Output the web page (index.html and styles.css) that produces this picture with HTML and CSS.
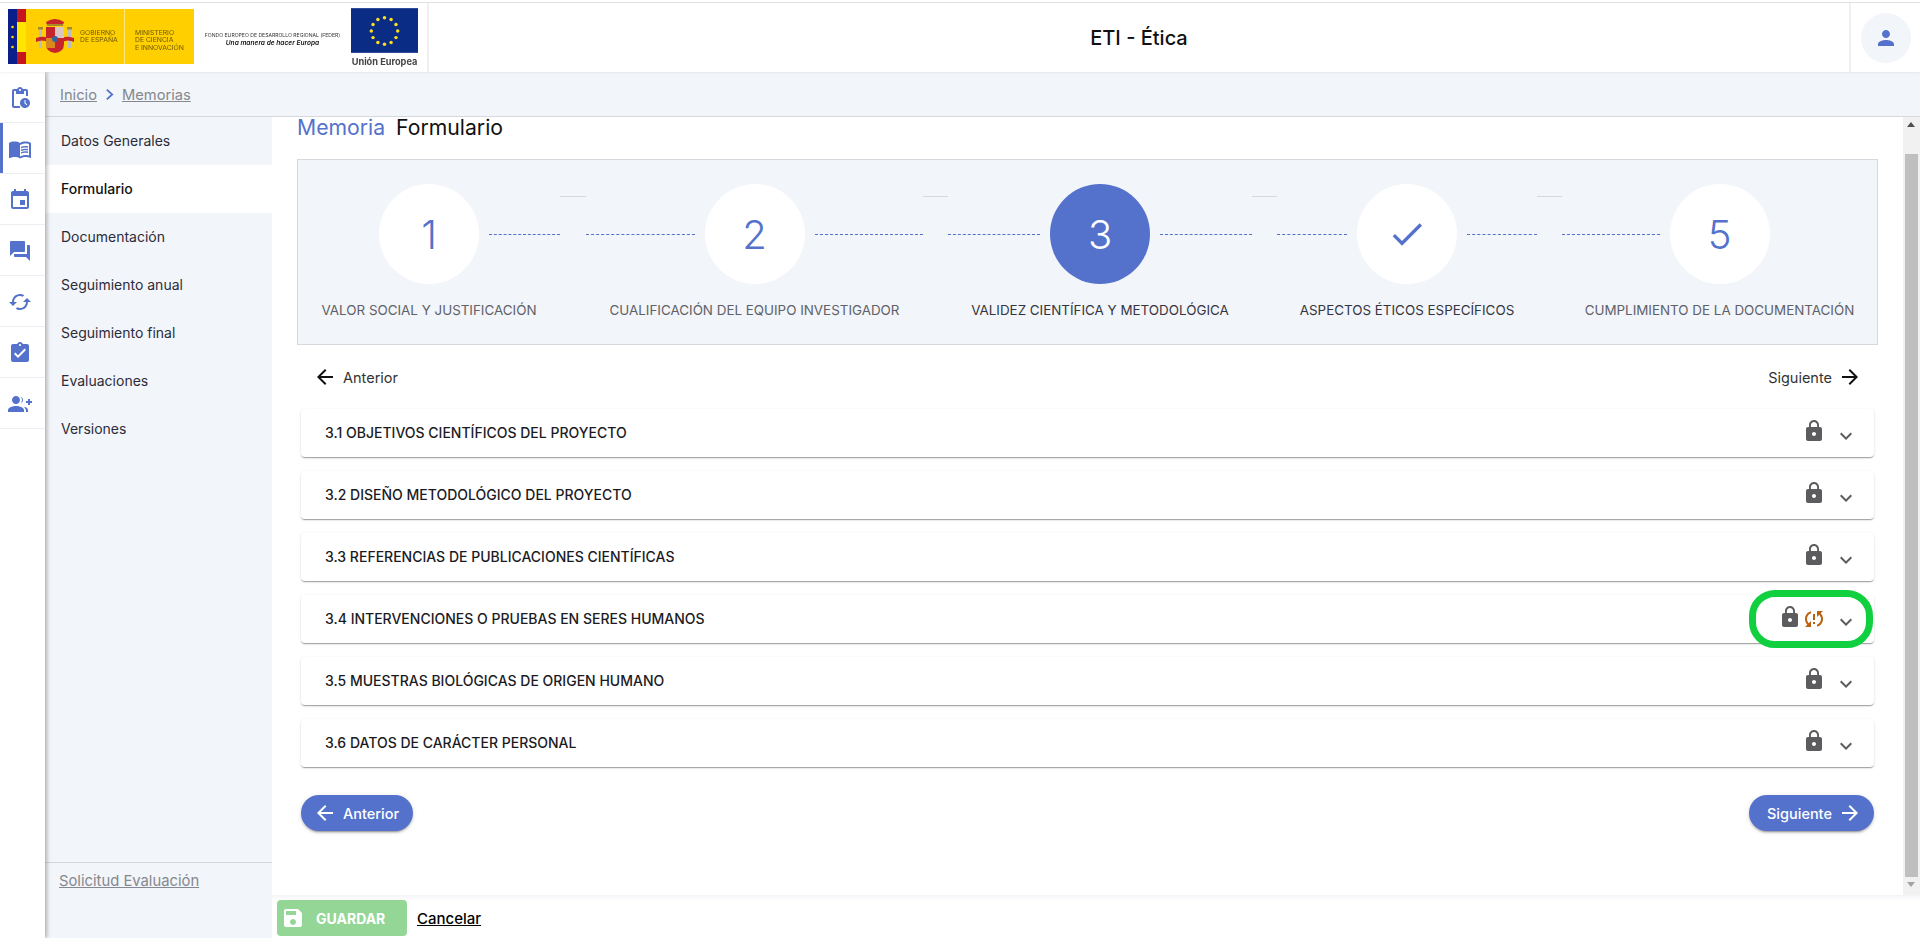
FILE: index.html
```html
<!DOCTYPE html>
<html lang="es">
<head>
<meta charset="utf-8">
<title>ETI - Ética</title>
<link rel="stylesheet" href="styles.css">
</head>
<body>
<svg class="defs" aria-hidden="true">
  <symbol id="i-pending" viewBox="0 0 24 24"><path d="M17 12c-2.76 0-5 2.24-5 5s2.24 5 5 5 5-2.24 5-5-2.24-5-5-5zm1.65 7.35L16.5 17.2V14h1v2.79l1.85 1.85-.7.71zM18 3h-3.18C14.4 1.84 13.3 1 12 1s-2.4.84-2.82 2H6c-1.1 0-2 .9-2 2v15c0 1.1.9 2 2 2h6v-2H6V5h2v3h8V5h2v5h2V5c0-1.1-.9-2-2-2zm-6 2c-.55 0-1-.45-1-1s.45-1 1-1 1 .45 1 1-.45 1-1 1z"/></symbol>
  <symbol id="i-book" viewBox="0 0 24 24"><path d="M21 5c-1.11-.35-2.33-.5-3.5-.5-1.95 0-4.05.4-5.5 1.5-1.45-1.1-3.55-1.5-5.5-1.5S2.45 4.9 1 6v14.65c0 .25.25.5.5.5.1 0 .15-.05.25-.05C3.1 20.45 5.05 20 6.5 20c1.95 0 4.05.4 5.5 1.5 1.35-.85 3.8-1.5 5.5-1.5 1.65 0 3.35.3 4.75 1.05.1.05.15.05.25.05.25 0 .5-.25.5-.5V6c-.6-.45-1.25-.75-2-1zm0 13.5c-1.1-.35-2.3-.5-3.5-.5-1.7 0-4.15.65-5.5 1.5V8c1.35-.85 3.8-1.5 5.5-1.5 1.2 0 2.4.15 3.5.5v11.5z"/><path d="M17.5 10.5c.88 0 1.73.09 2.5.26V9.24c-.79-.15-1.64-.24-2.5-.24-1.7 0-3.24.29-4.5.83v1.66c1.13-.64 2.7-.99 4.5-.99zM13 12.49v1.66c1.13-.64 2.7-.99 4.5-.99.88 0 1.73.09 2.5.26V11.9c-.79-.15-1.64-.24-2.5-.24-1.7 0-3.24.3-4.5.83zM17.5 14.33c-1.7 0-3.24.29-4.5.83v1.66c1.13-.64 2.7-.99 4.5-.99.88 0 1.73.09 2.5.26v-1.52c-.79-.16-1.64-.24-2.5-.24z"/></symbol>
  <symbol id="i-event" viewBox="0 0 24 24"><path d="M17 12h-5v5h5v-5zM16 1v2H8V1H6v2H5c-1.11 0-1.99.9-1.99 2L3 19c0 1.1.89 2 2 2h14c1.1 0 2-.9 2-2V5c0-1.1-.9-2-2-2h-1V1h-2zm3 18H5V8h14v11z"/></symbol>
  <symbol id="i-forum" viewBox="0 0 24 24"><path d="M21 6h-2v9H6v2c0 .55.45 1 1 1h11l4 4V7c0-.55-.45-1-1-1zm-4 6V3c0-.55-.45-1-1-1H3c-.55 0-1 .45-1 1v14l4-4h10c.55 0 1-.45 1-1z"/></symbol>
  <symbol id="i-cached" viewBox="0 0 24 24"><path d="M19 8l-4 4h3c0 3.31-2.69 6-6 6-1.01 0-1.97-.25-2.8-.7l-1.46 1.46C8.97 19.54 10.43 20 12 20c4.42 0 8-3.58 8-8h3l-4-4zM6 12c0-3.31 2.69-6 6-6 1.01 0 1.97.25 2.8.7l1.46-1.46C15.03 4.46 13.57 4 12 4c-4.42 0-8 3.58-8 8H1l4 4 4-4H6z"/></symbol>
  <symbol id="i-turned" viewBox="0 0 24 24"><path d="M19 3h-4.18C14.4 1.84 13.3 1 12 1c-1.3 0-2.4.84-2.82 2H5c-1.1 0-2 .9-2 2v14c0 1.1.9 2 2 2h14c1.1 0 2-.9 2-2V5c0-1.1-.9-2-2-2zm-7 0c.55 0 1 .45 1 1s-.45 1-1 1-1-.45-1-1 .45-1 1-1zm-2 14l-4-4 1.41-1.41L10 14.17l6.59-6.59L18 9l-8 8z"/></symbol>
  <symbol id="i-group" viewBox="0 0 24 24"><path d="M22 9V7h-2v2h-2v2h2v2h2v-2h2V9zM8 12c2.21 0 4-1.79 4-4s-1.79-4-4-4-4 1.79-4 4 1.79 4 4 4zm0 2c-2.67 0-8 1.34-8 4v2h16v-2c0-2.66-5.33-4-8-4zm4.51-8.95C13.43 5.8 14 6.9 14 8s-.57 2.2-1.49 2.95c1.53-.27 2.49-1.48 2.49-2.95s-.96-2.68-2.49-2.95zM16.53 15.83C17.44 16.64 18 17.64 18 19v1h2v-2c0-1.45-1.59-2.51-3.47-3.17z"/></symbol>
  <symbol id="i-person" viewBox="0 0 24 24"><path d="M12 12c2.21 0 4-1.79 4-4s-1.79-4-4-4-4 1.79-4 4 1.79 4 4 4zm0 2c-2.67 0-8 1.34-8 4v2h16v-2c0-2.66-5.33-4-8-4z"/></symbol>
  <symbol id="i-lock" viewBox="0 0 24 24"><path d="M18 8h-1V6c0-2.76-2.24-5-5-5S7 3.24 7 6v2H6c-1.1 0-2 .9-2 2v10c0 1.1.9 2 2 2h12c1.1 0 2-.9 2-2V10c0-1.1-.9-2-2-2zm-6 9c-1.1 0-2-.9-2-2s.9-2 2-2 2 .9 2 2-.9 2-2 2zm3.1-9H8.9V6c0-1.71 1.39-3.1 3.1-3.1 1.71 0 3.1 1.39 3.1 3.1v2z"/></symbol>
  <symbol id="i-back" viewBox="0 0 24 24"><path d="M20 11H7.83l5.59-5.59L12 4l-8 8 8 8 1.41-1.41L7.83 13H20v-2z"/></symbol>
  <symbol id="i-forward" viewBox="0 0 24 24"><path d="M12 4l-1.41 1.41L16.17 11H4v2h12.17l-5.58 5.59L12 20l8-8z"/></symbol>
  <symbol id="i-more" viewBox="0 0 24 24"><path d="M16.59 8.59L12 13.17 7.41 8.59 6 10l6 6 6-6z"/></symbol>
  <symbol id="i-check" viewBox="0 0 24 24"><path d="M9 16.17L4.83 12l-1.42 1.41L9 19 21 7l-1.41-1.41z"/></symbol>
  <symbol id="i-save" viewBox="0 0 24 24"><path d="M17 3H5c-1.11 0-2 .9-2 2v14c0 1.1.89 2 2 2h14c1.1 0 2-.9 2-2V7l-4-4zm-5 16c-1.66 0-3-1.34-3-3s1.34-3 3-3 3 1.34 3 3-1.34 3-3 3zm3-10H5V5h10v4z"/></symbol>
  <symbol id="i-sync" viewBox="0 0 24 24"><path d="M3 12c0 2.21.91 4.2 2.36 5.64L3 20h6v-6l-2.24 2.24C5.68 15.15 5 13.66 5 12c0-2.61 1.67-4.83 4-5.65V4.26C5.55 5.15 3 8.27 3 12zm8 5h2v-2h-2v2zM21 4h-6v6l2.24-2.24C18.32 8.85 19 10.34 19 12c0 2.61-1.67 4.83-4 5.65v2.09c3.45-.89 6-4.01 6-7.74 0-2.21-.91-4.2-2.36-5.64L21 4zm-10 9h2V7h-2v6z"/></symbol>
</svg>

<header class="topbar">
  <div class="logos">
    <div class="gov">
      <div class="gov-flag">
        <span class="flag-blue"><svg viewBox="0 0 9 55" class="flag-stars"><g fill="#ffd400"><circle cx="4.5" cy="18" r="1.3"/><circle cx="4.5" cy="28" r="1.3"/><circle cx="4.5" cy="38" r="1.3"/></g></svg></span>
        <span class="flag-red"><span class="flag-yellow"></span></span>
      </div>
      <svg class="arms" viewBox="0 0 38 38">
        <path d="M10 6 q9-6 18 0 l-1 3 h-16z" fill="#c8242b"/>
        <rect x="11" y="8" width="16" height="2" fill="#a8892a"/>
        <rect x="3" y="13" width="3" height="19" fill="#b9bcc0"/>
        <rect x="32" y="13" width="3" height="19" fill="#b9bcc0"/>
        <rect x="2" y="11" width="5" height="2.5" fill="#a8892a"/>
        <rect x="31" y="11" width="5" height="2.5" fill="#a8892a"/>
        <path d="M0 22 q10-3 12 1 v3 q-6-3-12 0z" fill="#c8242b"/>
        <path d="M38 22 q-10-3-12 1 v3 q6-3 12 0z" fill="#c8242b"/>
        <path d="M10 11 h18 v17 q0 8-9 9 q-9-1-9-9z" fill="#c8242b"/>
        <rect x="19" y="11" width="9" height="11" fill="#d9c6c4"/>
        <rect x="10" y="22" width="9" height="10" fill="#d98a1f"/>
        <circle cx="19" cy="23" r="3" fill="#35659c"/>
      </svg>
      <div class="gov-name">GOBIERNO<br>DE ESPAÑA</div>
      <div class="gov-ministry">MINISTERIO<br>DE CIENCIA<br>E INNOVACIÓN</div>
    </div>
    <div class="feder">
      <span class="feder-name">FONDO EUROPEO DE DESARROLLO REGIONAL (FEDER)</span>
      <span class="feder-motto">Una manera de hacer Europa</span>
    </div>
    <div class="eu">
      <svg class="eu-flag" viewBox="0 0 66 44">
        <rect width="66" height="44" fill="#0b2c84"/>
        <g fill="#ffdf20">
          <circle cx="33" cy="9.5" r="1.7"/><circle cx="39.5" cy="11.2" r="1.7"/><circle cx="44.3" cy="16" r="1.7"/><circle cx="46" cy="22.5" r="1.7"/><circle cx="44.3" cy="29" r="1.7"/><circle cx="39.5" cy="33.8" r="1.7"/><circle cx="33" cy="35.5" r="1.7"/><circle cx="26.5" cy="33.8" r="1.7"/><circle cx="21.7" cy="29" r="1.7"/><circle cx="20" cy="22.5" r="1.7"/><circle cx="21.7" cy="16" r="1.7"/><circle cx="26.5" cy="11.2" r="1.7"/>
        </g>
      </svg>
      <span class="eu-name">Unión Europea</span>
    </div>
  </div>
  <div class="app-title">ETI - Ética</div>
  <div class="user-box"><span class="avatar"><svg class="ico-20"><use href="#i-person"/></svg></span></div>
</header>

<div class="below">
  <nav class="rail">
    <a class="rail-item"><svg class="ico-rail"><use href="#i-pending"/></svg></a>
    <a class="rail-item is-active"><svg class="ico-rail"><use href="#i-book"/></svg></a>
    <a class="rail-item"><svg class="ico-rail"><use href="#i-event"/></svg></a>
    <a class="rail-item"><svg class="ico-rail"><use href="#i-forum"/></svg></a>
    <a class="rail-item"><svg class="ico-rail"><use href="#i-cached"/></svg></a>
    <a class="rail-item"><svg class="ico-rail"><use href="#i-turned"/></svg></a>
    <a class="rail-item"><svg class="ico-rail"><use href="#i-group"/></svg></a>
  </nav>

  <div class="workspace">
    <div class="breadcrumb">
      <a class="crumb">Inicio</a>
      <svg class="crumb-sep" viewBox="0 0 10 14"><path d="M2 1.5 L8 7 L2 12.5" fill="none" stroke="#5472cc" stroke-width="2"/></svg>
      <a class="crumb">Memorias</a>
    </div>
    <div class="panes">
      <aside class="side">
        <ul class="side-menu">
          <li class="side-item">Datos Generales</li>
          <li class="side-item is-current">Formulario</li>
          <li class="side-item">Documentación</li>
          <li class="side-item">Seguimiento anual</li>
          <li class="side-item">Seguimiento final</li>
          <li class="side-item">Evaluaciones</li>
          <li class="side-item">Versiones</li>
        </ul>
        <div class="side-foot"><a class="side-link">Solicitud Evaluación</a></div>
      </aside>

      <main class="main">
        <div class="scroller">
          <div class="content">
            <h1 class="page-title"><span class="page-title-a">Memoria</span> <span class="page-title-b">Formulario</span></h1>

            <section class="stepper">
              <div class="step">
                <div class="step-top"><span class="dash is-hidden"></span><span class="circle">1</span><span class="dash"></span></div>
                <div class="step-label">VALOR SOCIAL Y JUSTIFICACIÓN</div>
              </div>
              <span class="step-line"></span>
              <div class="step">
                <div class="step-top"><span class="dash"></span><span class="circle">2</span><span class="dash"></span></div>
                <div class="step-label">CUALIFICACIÓN DEL EQUIPO INVESTIGADOR</div>
              </div>
              <span class="step-line"></span>
              <div class="step">
                <div class="step-top"><span class="dash"></span><span class="circle is-current">3</span><span class="dash"></span></div>
                <div class="step-label is-strong">VALIDEZ CIENTÍFICA Y METODOLÓGICA</div>
              </div>
              <span class="step-line"></span>
              <div class="step">
                <div class="step-top"><span class="dash"></span><span class="circle"><svg class="ico-check"><use href="#i-check"/></svg></span><span class="dash"></span></div>
                <div class="step-label is-strong">ASPECTOS ÉTICOS ESPECÍFICOS</div>
              </div>
              <span class="step-line"></span>
              <div class="step">
                <div class="step-top"><span class="dash"></span><span class="circle">5</span><span class="dash is-hidden"></span></div>
                <div class="step-label">CUMPLIMIENTO DE LA DOCUMENTACIÓN</div>
              </div>
            </section>

            <div class="pager">
              <a class="pager-link"><svg class="ico-24"><use href="#i-back"/></svg>Anterior</a>
              <a class="pager-link">Siguiente<svg class="ico-24"><use href="#i-forward"/></svg></a>
            </div>

            <div class="accordion">
              <div class="panel"><span class="panel-title">3.1 OBJETIVOS CIENTÍFICOS DEL PROYECTO</span><svg class="ico-lock"><use href="#i-lock"/></svg><svg class="ico-more"><use href="#i-more"/></svg></div>
              <div class="panel"><span class="panel-title">3.2 DISEÑO METODOLÓGICO DEL PROYECTO</span><svg class="ico-lock"><use href="#i-lock"/></svg><svg class="ico-more"><use href="#i-more"/></svg></div>
              <div class="panel"><span class="panel-title">3.3 REFERENCIAS DE PUBLICACIONES CIENTÍFICAS</span><svg class="ico-lock"><use href="#i-lock"/></svg><svg class="ico-more"><use href="#i-more"/></svg></div>
              <div class="panel"><span class="panel-title">3.4 INTERVENCIONES O PRUEBAS EN SERES HUMANOS</span><svg class="ico-lock"><use href="#i-lock"/></svg><svg class="ico-sync"><use href="#i-sync"/></svg><svg class="ico-more"><use href="#i-more"/></svg><span class="callout"></span></div>
              <div class="panel"><span class="panel-title">3.5 MUESTRAS BIOLÓGICAS DE ORIGEN HUMANO</span><svg class="ico-lock"><use href="#i-lock"/></svg><svg class="ico-more"><use href="#i-more"/></svg></div>
              <div class="panel"><span class="panel-title">3.6 DATOS DE CARÁCTER PERSONAL</span><svg class="ico-lock"><use href="#i-lock"/></svg><svg class="ico-more"><use href="#i-more"/></svg></div>
            </div>

            <div class="actions">
              <a class="pill pill-back"><svg class="ico-24"><use href="#i-back"/></svg>Anterior</a>
              <a class="pill pill-next">Siguiente<svg class="ico-24"><use href="#i-forward"/></svg></a>
            </div>
          </div>
          <div class="scrollbar">
            <span class="sb-up"></span>
            <span class="sb-thumb"></span>
            <span class="sb-down"></span>
          </div>
        </div>
        <footer class="savebar">
          <button class="save-btn"><svg class="ico-save"><use href="#i-save"/></svg>GUARDAR</button>
          <a class="cancel">Cancelar</a>
        </footer>
      </main>
    </div>
  </div>
</div>
</body>
</html>
```
FILE: styles.css
```css
* { box-sizing: border-box; }
html, body { margin: 0; height: 100%; overflow: hidden; }
body {
  display: flex;
  flex-direction: column;
  width: 1920px;
  height: 938px;
  background: #fff;
  color: #1f1f2b;
  font-family: Inter, "Open Sans", "Liberation Sans", sans-serif;
  font-size: 14px;
}
.defs { display: none; }
svg { display: block; fill: currentColor; flex: none; }
a { cursor: pointer; }

/* top bar */
.topbar {
  display: flex;
  align-items: stretch;
  height: 70px;
  flex: none;
  border-top: 1px solid #dfe1e4;
  margin-top: 2px;
  position: relative;
  z-index: 3;
  background: #fff;
  box-shadow: 0 1px 2px rgba(0, 0, 0, .06);
}
.logos {
  width: 429px;
  flex: none;
  border-right: 2px solid #f0f0f0;
  display: flex;
  align-items: flex-start;
  padding: 6px 0 0 8px;
  filter: blur(.35px);
}
.gov {
  width: 186px;
  height: 55px;
  background: #ffcf00;
  display: flex;
  color: #6b5600;
  font-size: 6.8px;
  line-height: 7.3px;
  flex: none;
}
.gov-flag { display: flex; width: 18px; height: 55px; flex: none; }
.flag-blue { width: 9px; background: #0b1f8a; display: block; }
.flag-stars { width: 9px; height: 55px; }
.flag-red { width: 9px; background: #c5161d; display: flex; align-items: center; }
.flag-yellow { display: block; width: 9px; height: 30px; background: #ffe600; }
.arms { width: 38px; height: 38px; margin: 7px 0 0 10px; }
.gov-name { margin: 20px 0 0 6px; width: 44px; white-space: nowrap; }
.gov-ministry { padding: 20px 0 0 10px; border-left: 1px solid #ffe680; white-space: nowrap; }
.feder {
  width: 157px;
  flex: none;
  display: flex;
  flex-direction: column;
  align-items: center;
  padding-top: 23px;
  color: #333;
  white-space: nowrap;
}
.feder-name { font-size: 5.1px; line-height: 7px; }
.feder-motto { font-size: 6.6px; line-height: 9px; font-style: italic; font-weight: 600; color: #111; }
.eu { width: 67px; flex: none; display: flex; flex-direction: column; align-items: center; }
.eu-flag { width: 67px; height: 45px; margin-top: -1px; }
.eu-name { font-size: 9.2px; font-weight: 700; color: #444; margin-top: 3px; white-space: nowrap; }
.app-title {
  flex: 1;
  display: flex;
  align-items: center;
  justify-content: center;
  font-size: 20px;
  font-weight: 500;
  color: #111;
}
.user-box {
  width: 71px;
  flex: none;
  border-left: 2px solid #f0f0f0;
  display: flex;
  align-items: center;
  justify-content: center;
}
.avatar {
  width: 50px;
  height: 50px;
  border-radius: 50%;
  background: #f2f5f9;
  color: #5472cc;
  display: flex;
  align-items: center;
  justify-content: center;
}
.ico-20 { width: 24px; height: 24px; }

/* below */
.below { flex: 1; display: flex; min-height: 0; }

.rail {
  width: 45px;
  flex: none;
  background: #fff;
  box-shadow: 2px 0 4px rgba(0, 0, 0, .28);
  position: relative;
  z-index: 2;
  color: #5472cc;
  display: flex;
  flex-direction: column;
}
.rail-item {
  height: 51px;
  flex: none;
  display: flex;
  align-items: center;
  justify-content: center;
  padding: 2px 5px 0 0;
  border-bottom: 1px solid #eceef1;
}
.rail-item.is-active { box-shadow: inset 3px 0 0 #5472cc; }
.ico-rail { width: 24px; height: 24px; }

.workspace { flex: 1; display: flex; flex-direction: column; min-width: 0; }
.breadcrumb {
  height: 45px;
  flex: none;
  background: #f2f5f9;
  border-bottom: 1px solid #d5d9de;
  display: flex;
  align-items: center;
  padding: 1px 0 0 15px;
  gap: 8px;
  font-size: 14.7px;
}
.crumb { color: #85888f; text-decoration: underline; }
.crumb-sep { width: 9px; height: 13px; }

.panes { flex: 1; display: flex; min-height: 0; }
.side {
  width: 227px;
  flex: none;
  background: #f2f5f9;
  display: flex;
  flex-direction: column;
  justify-content: space-between;
}
.side-menu { list-style: none; margin: 0; padding: 0; }
.side-item {
  height: 48px;
  display: flex;
  align-items: center;
  padding: 0 0 2px 16px;
  font-size: 14px;
  color: #2c2c3a;
}
.side-item.is-current { background: #fff; color: #111; font-weight: 500; }
.side-foot { height: 76px; border-top: 1px solid #d5d9de; padding: 8px 0 0 14px; }
.side-link { color: #85888f; text-decoration: underline; font-size: 14.8px; line-height: 20px; }

.main { flex: 1; display: flex; flex-direction: column; min-width: 0; }
.scroller { height: 778px; flex: none; display: flex; background: #fff; }
.content { flex: 1; min-width: 0; padding: 0 25px; }

.page-title { margin: 0; height: 42px; font-size: 21.2px; font-weight: 400; line-height: 20px; white-space: nowrap; }
.page-title-a { color: #5472cc; }
.page-title-b { color: #111; margin-left: 5px; }

.stepper {
  height: 186px;
  background: #f2f5f9;
  border: 1px solid #d5d9de;
  display: grid;
  grid-template-columns: 262px 26px 337px 25px 304px 25px 260px 25px 1fr;
  align-items: start;
}
.step { display: flex; flex-direction: column; align-items: stretch; padding-top: 24px; }
.step-top { display: flex; align-items: center; gap: 10px; }
.dash { flex: 1; border-top: 1px dashed #5472cc; }
.dash.is-hidden { visibility: hidden; }
.circle {
  width: 100px;
  height: 100px;
  flex: none;
  border-radius: 50%;
  background: #fff;
  color: #5472cc;
  font-size: 40px;
  font-weight: 300;
  display: flex;
  align-items: center;
  justify-content: center;
}
.circle.is-current { background: #5472cc; color: #fff; }
.ico-check { width: 40px; height: 40px; }
.step-label {
  margin-top: 16px;
  font-size: 13.4px;
  line-height: 20px;
  color: #5f6168;
  text-align: center;
  white-space: nowrap;
}
.step-label.is-strong { color: #35353f; }
.step-line { height: 1px; margin-top: 36px; background: #d5d9de; }

.pager {
  height: 64px;
  display: flex;
  align-items: center;
  justify-content: space-between;
  padding: 0 16px;
}
.pager-link { display: flex; align-items: center; gap: 6px; color: #333; font-size: 14.5px; }
.pager-link .ico-24 { color: #111; }
.ico-24 { width: 24px; height: 24px; }

.accordion { margin: 0 4px; }
.panel {
  height: 48px;
  margin-bottom: 14px;
  background: #fff;
  border-radius: 4px;
  box-shadow: 0 2px 1px -1px rgba(0, 0, 0, .2), 0 1px 1px 0 rgba(0, 0, 0, .14), 0 1px 3px 0 rgba(0, 0, 0, .12);
  display: flex;
  align-items: center;
  padding: 0 16px 0 24px;
  position: relative;
}
.panel-title { flex: 1; font-size: 14px; font-weight: 500; color: #1b1b1f; padding-bottom: 2px; }
.ico-lock { width: 24px; height: 24px; color: #5c5c5f; margin-top: -4px; }
.ico-sync { width: 24px; height: 24px; color: #b8620e; }
.ico-more { width: 24px; height: 24px; color: #5c5c5f; margin-left: 8px; margin-top: 6px; }
.callout {
  position: absolute;
  right: 1px;
  top: -5px;
  width: 124px;
  height: 58px;
  border: 7px solid #10d040;
  border-radius: 26px;
}

.actions { display: flex; justify-content: space-between; margin: 28px 4px 0; }
.pill {
  height: 36px;
  border-radius: 18px;
  background: #5472cc;
  color: #fff;
  font-size: 14.5px;
  font-weight: 500;
  display: flex;
  align-items: center;
  gap: 6px;
  box-shadow: 0 3px 1px -2px rgba(0, 0, 0, .2), 0 2px 2px 0 rgba(0, 0, 0, .14), 0 1px 5px 0 rgba(0, 0, 0, .12);
}
.pill-back { width: 112px; padding-left: 12px; }
.pill-next { width: 125px; padding-left: 18px; }

.scrollbar { width: 17px; flex: none; background: #f1f1f1; display: flex; flex-direction: column; align-items: center; }
.sb-up, .sb-down { display: flex; flex: none; width: 100%; position: relative; }
.sb-up { height: 37px; }
.sb-down { height: 18px; }
.sb-up::after {
  content: "";
  position: absolute;
  left: 4px;
  top: 5px;
  border: 4px solid transparent;
  border-top: 0;
  border-bottom: 5px solid #505050;
}
.sb-down::after {
  content: "";
  position: absolute;
  left: 4px;
  top: 5px;
  border: 4px solid transparent;
  border-bottom: 0;
  border-top: 5px solid #a3a3a3;
}
.sb-thumb { flex: 1; width: 13px; background: #bfbfbf; }

.savebar {
  flex: 1;
  display: flex;
  align-items: center;
  gap: 10px;
  padding: 5px 0 2px 5px;
  background: #fff;
  box-shadow: inset 0 6px 6px -6px rgba(120, 130, 170, .2);
}
.save-btn {
  width: 130px;
  height: 36px;
  border: 0;
  border-radius: 4px;
  background: #93d696;
  color: #fff;
  font: 700 14px Inter, "Liberation Sans", sans-serif;
  display: flex;
  align-items: center;
  padding: 0 0 0 4px;
  gap: 11px;
}
.ico-save { width: 24px; height: 24px; }
.cancel { color: #000; font-weight: 500; font-size: 15px; text-decoration: underline; }
```
